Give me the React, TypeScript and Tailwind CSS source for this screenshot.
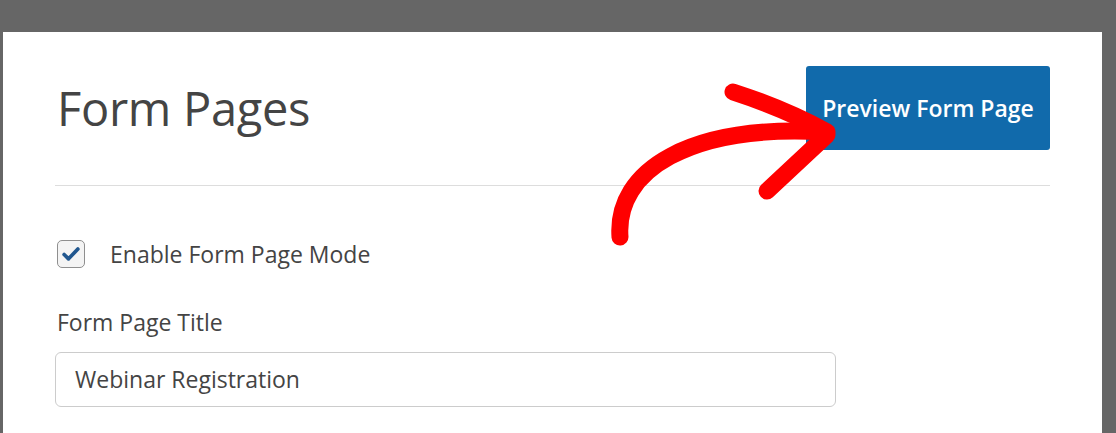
export default function App() {
  return (
    <div
      className="relative h-[433px] w-[1116px] overflow-hidden bg-[#666666] pl-[3px] pt-[32px]"
      style={{ fontFamily: '"Open Sans", "Noto Sans", sans-serif' }}
    >
      <div className="h-[401px] w-[1099px] bg-white px-[52px] pt-[34px] text-[#444444]">
        {/* Header */}
        <div className="flex items-center justify-between">
          <h1 className="pl-[2px] text-[47px] leading-[60px] font-medium tracking-[-0.3px] text-[#444444]">Form Pages</h1>
          <button className="flex h-[84px] w-[244px] items-center justify-center rounded-[3px] bg-[#116aab] text-[23px] font-semibold text-white">
            Preview Form Page
          </button>
        </div>

        <div className="mt-[35px] h-px bg-[#dddddd]" />

        {/* Enable toggle */}
        <label className="mt-[53px] flex items-center pl-[2px]">
          <span className="flex h-[28px] w-[28px] items-center justify-center rounded-[5px] border border-[#8f8f8f] bg-[#f4f4f4]">
            <svg viewBox="0 0 24 24" className="h-[22px] w-[22px]" fill="none">
              <path d="M4.5 12.5l4.8 4.8L19.5 6.5" stroke="#21578f" strokeWidth="4" strokeLinecap="round" strokeLinejoin="round" />
            </svg>
          </span>
          <span className="ml-[25px] text-[23px] leading-[30px]">Enable Form Page Mode</span>
        </label>

        {/* Title field */}
        <div className="mt-[38px] pl-[2px] text-[23px] leading-[30px]">Form Page Title</div>
        <div className="mt-[15px] flex h-[55px] w-[781px] items-center rounded-[6px] border border-[#cccccc] px-[19px] text-[23px]">
          Webinar Registration
        </div>
      </div>

      {/* Annotation arrow */}
      <svg className="pointer-events-none absolute left-0 top-0" width="1116" height="433" fill="none">
        <path d="M620 237 C615 170 690 124 826 132" stroke="#ff0000" strokeWidth="17" strokeLinecap="round" />
        <path d="M733 92 C770 104 800 117 827 132" stroke="#ff0000" strokeWidth="17" strokeLinecap="round" />
        <path d="M827 135 L767 191" stroke="#ff0000" strokeWidth="17" strokeLinecap="round" />
      </svg>
    </div>
  );
}
